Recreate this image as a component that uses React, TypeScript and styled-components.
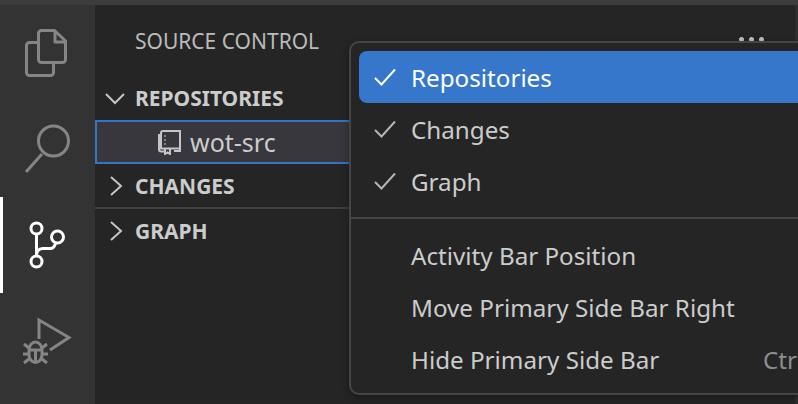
import React from "react";
import styled, { createGlobalStyle } from "styled-components";

const GlobalStyle = createGlobalStyle`
  html, body {
    margin: 0;
    padding: 0;
    background: #252526;
  }
  body {
    font-family: "Noto Sans", "Open Sans", sans-serif;
  }
`;

const Files = () => (
  <svg width="44" height="50" viewBox="0 0 44 50" fill="none" stroke="#858585" strokeWidth="3" strokeLinejoin="round">
    <path d="M16.500 2.500h13L40.500 13v18.500a3 3 0 0 1-3 3h-21a3 3 0 0 1-3-3v-26a3 3 0 0 1 3-3z" />
    <path d="M30 3v11h10.500" />
    <path d="M13.500 14.500h-9a3 3 0 0 0-3 3v27a3 3 0 0 0 3 3h21a3 3 0 0 0 3-3v-10" />
  </svg>
);

const Search = () => (
  <svg width="48" height="50" viewBox="0 0 48 50" fill="none" stroke="#858585" strokeWidth="3">
    <circle cx="30.500" cy="17" r="15" />
    <path d="M19 30L3 48" />
  </svg>
);

const Branch = () => (
  <svg width="38" height="50" viewBox="0 0 38 50" fill="none" stroke="#fff" strokeWidth="3">
    <circle cx="8.500" cy="8.500" r="5.500" />
    <circle cx="8.500" cy="41.500" r="5.500" />
    <circle cx="29.500" cy="17" r="6" />
    <path d="M8.500 14v22" />
    <path d="M8.500 36c0-4 2-7.500 6-7.500h8c2 0 4-2 5-5" />
  </svg>
);

const Debug = () => (
  <svg width="50" height="50" viewBox="0 0 50 50" fill="none" stroke="#858585" strokeWidth="3">
    <path d="M17 23V4l30 17.500L28 34" />
    <path d="M7 34a6.500 8 0 0 1 13 0zv5a6.500 7.500 0 0 0 13 0v-5" />
    <path d="M13.500 34v13M1 38h6M20 38h6M7 32l-5-4M20 32l5-4M7 43l-5 4M20 43l5 4" />
  </svg>
);

const Chevron = ({ open }: { open?: boolean }) => (
  <svg width="20" height="20" viewBox="0 0 20 20" fill="none" stroke="#c5c5c5" strokeWidth="2">
    {open ? <path d="M1 6l9 9 9-9" /> : <path d="M6 1l10 9-10 9" />}
  </svg>
);

const RepoIcon = () => (
  <svg width="23" height="25" viewBox="0 0 23 25" fill="none" stroke="#c5c5c5" strokeWidth="2">
    <path d="M3 18V3a2 2 0 0 1 2-2h17v20h-6" />
    <path d="M1 4v15.500a2 2 0 0 0 2 2h3" />
    <path d="M1 18.500h21" />
    <path d="M7 5.500v1M7 9.500v1M7 13.500v1" />
    <path d="M7 19v5l2.500-1.500L12 24v-5" />
  </svg>
);

const Check = ({ active }: { active?: boolean }) => (
  <svg width="22" height="18" viewBox="0 0 22 18" fill="none" stroke={active ? "#fff" : "#b4b4b4"} strokeWidth="2">
    <path d="M1 10l6.500 6.500L21 1.500" />
  </svg>
);

const Page = styled.div`
  position: relative;
  width: 798px;
  height: 404px;
  overflow: hidden;
  background: #252526;
`;

const TitleStrip = styled.div`
  height: 5px;
  background: #3c3c3c;
`;

const Body = styled.div`
  display: flex;
  height: 399px;
`;

const ActivityBar = styled.nav`
  width: 95px;
  flex: none;
  background: #333333;
  display: flex;
  flex-direction: column;
`;

const ActivityItem = styled.div<{ $active?: boolean }>`
  width: 95px;
  height: 96px;
  box-sizing: border-box;
  border-left: 3px solid ${(p) => (p.$active ? "#ffffff" : "transparent")};
  display: flex;
  align-items: center;
  justify-content: center;
  padding-right: 4px;
`;

const SideBar = styled.aside`
  flex: 1;
  display: flex;
  flex-direction: column;
`;

const EditorEdge = styled.div`
  width: 3px;
  flex: none;
  background: #2e2e2e;
`;

const SideTitle = styled.div`
  height: 80px;
  box-sizing: border-box;
  padding: 21px 0 0 40px;
  font-size: 21px;
  line-height: 30px;
  color: #bbbbbb;
`;

const SectionHeader = styled.div`
  height: 35px;
  box-sizing: border-box;
  display: flex;
  align-items: center;
  gap: 10px;
  padding: 0 0 9px 10px;
  font-size: 21px;
  font-weight: 700;
  color: #cccccc;
`;

const ChangesHeader = styled(SectionHeader)`
  height: 45px;
  padding: 1px 0 0 10px;
  border-bottom: 2px solid #3f3f3f;
`;

const GraphHeader = styled(SectionHeader)`
  height: 44px;
  padding: 0 0 0 10px;
`;

const RepoRow = styled.div`
  height: 44px;
  box-sizing: border-box;
  background: #37373d;
  border: 2px solid #3574c4;
  display: flex;
  align-items: center;
  gap: 9px;
  padding-left: 61px;
  font-size: 25px;
  color: #cccccc;
`;

const MoreDots = styled.div`
  position: absolute;
  left: 739px;
  top: 37px;
  display: flex;
  gap: 5px;
`;

const Dot = styled.span`
  width: 5px;
  height: 5px;
  border-radius: 50%;
  background: #c5c5c5;
`;

const Menu = styled.div`
  position: absolute;
  left: 349px;
  top: 41px;
  width: 520px;
  height: 354px;
  box-sizing: border-box;
  background: #252526;
  border: 2px solid #454545;
  border-radius: 10px;
  padding: 8px;
  color: #cccccc;
  font-size: 24.2px;
  box-shadow: 0 2px 8px rgba(0, 0, 0, 0.36);
`;

const MenuItem = styled.div<{ $active?: boolean }>`
  height: 52px;
  box-sizing: border-box;
  display: flex;
  align-items: center;
  border-radius: 8px;
  padding-left: 15px;
  background: ${(p) => (p.$active ? "#3677cc" : "transparent")};
  color: ${(p) => (p.$active ? "#ffffff" : "#cccccc")};
`;

const CheckSlot = styled.span`
  width: 37px;
  flex: none;
  display: flex;
  align-items: center;
`;

const MenuLabel = styled.span`
  white-space: nowrap;
`;

const Shortcut = styled.span`
  position: absolute;
  left: 412px;
  color: #8e8e8e;
  white-space: nowrap;
`;

const Separator = styled.div`
  height: 2px;
  background: #454545;
  margin: 10px -8px 10px;
`;

const App = () => {
  return (
    <Page>
      <GlobalStyle />
      <TitleStrip />
      <Body>
        <ActivityBar>
          <ActivityItem>
            <Files />
          </ActivityItem>
          <ActivityItem>
            <Search />
          </ActivityItem>
          <ActivityItem $active>
            <Branch />
          </ActivityItem>
          <ActivityItem>
            <Debug />
          </ActivityItem>
        </ActivityBar>
        <SideBar>
          <SideTitle>SOURCE CONTROL</SideTitle>
          <SectionHeader>
            <Chevron open />
            REPOSITORIES
          </SectionHeader>
          <RepoRow>
            <RepoIcon />
            wot-src
          </RepoRow>
          <ChangesHeader>
            <Chevron />
            CHANGES
          </ChangesHeader>
          <GraphHeader>
            <Chevron />
            GRAPH
          </GraphHeader>
        </SideBar>
        <EditorEdge />
      </Body>
      <MoreDots>
        <Dot />
        <Dot />
        <Dot />
      </MoreDots>
      <Menu>
        <MenuItem $active>
          <CheckSlot>
            <Check active />
          </CheckSlot>
          <MenuLabel>Repositories</MenuLabel>
        </MenuItem>
        <MenuItem>
          <CheckSlot>
            <Check />
          </CheckSlot>
          <MenuLabel>Changes</MenuLabel>
        </MenuItem>
        <MenuItem>
          <CheckSlot>
            <Check />
          </CheckSlot>
          <MenuLabel>Graph</MenuLabel>
        </MenuItem>
        <Separator />
        <MenuItem>
          <CheckSlot />
          <MenuLabel>Activity Bar Position</MenuLabel>
        </MenuItem>
        <MenuItem>
          <CheckSlot />
          <MenuLabel>Move Primary Side Bar Right</MenuLabel>
        </MenuItem>
        <MenuItem>
          <CheckSlot />
          <MenuLabel>Hide Primary Side Bar</MenuLabel>
          <Shortcut>Ctrl+B</Shortcut>
        </MenuItem>
      </Menu>
    </Page>
  );
};

export default App;
